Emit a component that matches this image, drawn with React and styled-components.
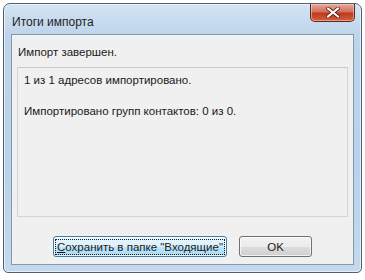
import React from 'react'
import styled, { createGlobalStyle } from 'styled-components'

const Global = createGlobalStyle`
  body {
    margin: 0;
    background: #ffffff;
    font-family: 'Liberation Sans', Arial, sans-serif;
  }
`

const Window = styled.div`
  margin: 3px 0 0 3px;
  width: 359px;
  height: 270px;
  box-sizing: border-box;
  border: 1px solid #4f5f72;
  border-radius: 7px 7px 5px 5px;
  background: linear-gradient(180deg, #d3e3f3 0%, #bed4eb 12%, #b9d1ea 60%, #c4d9ee 100%);
  box-shadow: inset 0 0 0 1px rgba(255, 255, 255, 0.6);
  padding: 0 7px 7px 7px;
  display: flex;
  flex-direction: column;
`

const TitleBar = styled.div`
  height: 30px;
  display: flex;
  align-items: flex-start;
`

const Title = styled.span`
  font-size: 12px;
  color: #1e1e1e;
  padding: 11px 0 0 1px;
  flex: 1;
`

const CloseButton = styled.div`
  width: 45px;
  height: 18px;
  margin-right: -1px;
  box-sizing: border-box;
  border: 1px solid #5a2a22;
  border-top: none;
  border-radius: 0 0 5px 5px;
  background: linear-gradient(180deg, #e7a99b 0%, #d2705c 45%, #c0391f 55%, #d25f3e 100%);
  box-shadow: inset 0 0 0 1px rgba(255, 220, 210, 0.5);
  display: flex;
  align-items: center;
  justify-content: center;
`

const Client = styled.div`
  flex: 1;
  background: #f0f0f0;
  border: 1px solid #8498b0;
  display: flex;
  flex-direction: column;
  padding: 11px 5px 7px 5px;
  font-size: 11.5px;
  color: #1a1a1a;
`

const Heading = styled.div`
  padding-left: 1px;
  margin-bottom: 9px;
`

const Panel = styled.div`
  flex: 1;
  border: 1px solid #d5d5d5;
  border-top-color: #c8c8c8;
  background: #f0f0f0;
  padding: 6px 6px;
  display: flex;
  flex-direction: column;
  gap: 19px;
`

const Buttons = styled.div`
  display: flex;
  justify-content: flex-end;
  gap: 12px;
  padding: 19px 36px 0 0;
`

const Button = styled.div`
  height: 21px;
  box-sizing: border-box;
  border: 1px solid ${(p) => (p.$focused ? '#3c7fb1' : '#707070')};
  border-radius: 3px;
  background: ${(p) =>
    p.$focused
      ? 'linear-gradient(180deg, #eaf6fd 0%, #d9f0fc 50%, #bee6fd 51%, #a7d9f5 100%)'
      : 'linear-gradient(180deg, #f2f2f2 0%, #ebebeb 50%, #dddddd 51%, #cfcfcf 100%)'};
  box-shadow: inset 0 0 0 1px rgba(255, 255, 255, 0.7);
  display: flex;
  align-items: center;
  justify-content: center;
  width: ${(p) => p.$width}px;
  padding: 2px;
  white-space: nowrap;
`

const Label = styled.span`
  display: block;
  width: 100%;
  text-align: center;
  line-height: 14px;
  outline: ${(p) => (p.$focused ? '1px dotted #1a1a1a' : 'none')};
  color: #1a1a1a;
`

const Mnemonic = styled.span`
  text-decoration: underline;
`

function CloseGlyph() {
  return (
    <svg width="14" height="11" viewBox="0 0 14 11">
      <path
        d="M2 1.5 L12 9.5 M12 1.5 L2 9.5"
        stroke="#5b1a10"
        strokeWidth="3.6"
        strokeLinecap="square"
      />
      <path
        d="M2 1.5 L12 9.5 M12 1.5 L2 9.5"
        stroke="#ffffff"
        strokeWidth="2"
        strokeLinecap="square"
      />
    </svg>
  )
}

const App = () => {
  return (
    <>
      <Global />
      <Window>
        <TitleBar>
          <Title>Итоги импорта</Title>
          <CloseButton>
            <CloseGlyph />
          </CloseButton>
        </TitleBar>
        <Client>
          <Heading>Импорт завершен.</Heading>
          <Panel>
            <div>1 из 1 адресов импортировано.</div>
            <div>Импортировано групп контактов: 0 из 0.</div>
          </Panel>
          <Buttons>
            <Button $focused $width={174}>
              <Label $focused>
                <Mnemonic>С</Mnemonic>охранить в папке "Входящие"
              </Label>
            </Button>
            <Button $width={73}>
              <Label>OK</Label>
            </Button>
          </Buttons>
        </Client>
      </Window>
    </>
  )
}

export default App
